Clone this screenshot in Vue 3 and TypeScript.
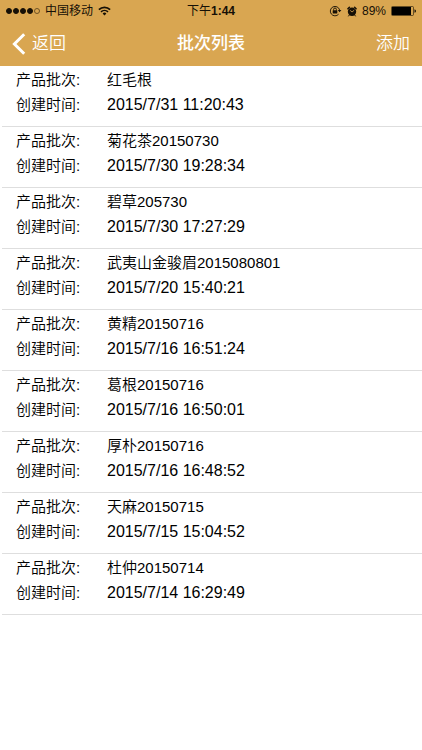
<script setup lang="ts">
interface Batch {
  name: string
  createdAt: string
}

const signalDots: boolean[] = [true, true, true, true, false]

const batches: Batch[] = [
  { name: '红毛根', createdAt: '2015/7/31 11:20:43' },
  { name: '菊花茶20150730', createdAt: '2015/7/30 19:28:34' },
  { name: '碧草205730', createdAt: '2015/7/30 17:27:29' },
  { name: '武夷山金骏眉2015080801', createdAt: '2015/7/20 15:40:21' },
  { name: '黄精20150716', createdAt: '2015/7/16 16:51:24' },
  { name: '葛根20150716', createdAt: '2015/7/16 16:50:01' },
  { name: '厚朴20150716', createdAt: '2015/7/16 16:48:52' },
  { name: '天麻20150715', createdAt: '2015/7/15 15:04:52' },
  { name: '杜仲20150714', createdAt: '2015/7/14 16:29:49' },
]
</script>

<template>
  <div class="screen">
    <header class="header">
      <div class="status">
        <div class="status-left">
          <span class="signal">
            <i v-for="(on, i) in signalDots" :key="i" class="dot" :class="{ on }"></i>
          </span>
          <span>中国移动</span>
          <svg width="13" height="10" viewBox="0 0 13 10" aria-hidden="true">
            <path d="M0.9 3.6 A8 8 0 0 1 12.1 3.6" fill="none" stroke="#161006" stroke-width="1.8" />
            <path d="M3 5.9 A5 5 0 0 1 10 5.9" fill="none" stroke="#161006" stroke-width="1.6" />
            <path d="M4.6 7.5 A2.7 2.7 0 0 1 8.4 7.5 L6.5 9.6 Z" fill="#161006" />
          </svg>
        </div>
        <div class="clock">下午<b>1:44</b></div>
        <div class="status-right">
          <svg width="13" height="12" viewBox="0 0 13 12" aria-hidden="true">
            <path d="M9.6 9.2 A4.7 4.7 0 1 1 10.6 5" fill="none" stroke="#161006" stroke-width="0.9" />
            <path d="M8.7 5 H12.4 L10.6 7.3 Z" fill="#161006" />
            <path d="M4.6 5.5 V4.4 A1.4 1.4 0 0 1 7.4 4.4 V5.5" fill="none" stroke="#161006" stroke-width="0.9" />
            <rect x="3.7" y="5.2" width="4.6" height="3.3" rx="0.4" fill="#161006" />
          </svg>
          <svg width="10" height="11" viewBox="0 0 10 11" aria-hidden="true">
            <circle cx="5" cy="5.8" r="4.2" fill="#161006" />
            <path d="M0.9 2.7 L2.4 1.3 M9.1 2.7 L7.6 1.3" stroke="#161006" stroke-width="1.5" stroke-linecap="round" />
            <path d="M2.2 9.2 L1.6 10 M7.8 9.2 L8.4 10" stroke="#161006" stroke-width="1" stroke-linecap="round" />
            <path d="M3.2 4.4 L5 6 L7.2 4.2" fill="none" stroke="#d9a651" stroke-width="0.8" />
          </svg>
          <span>89%</span>
          <svg width="25" height="10" viewBox="0 0 25 10" aria-hidden="true">
            <rect x="0.5" y="0.5" width="22" height="9" rx="1" fill="none" stroke="#161006" stroke-width="0.6" />
            <rect x="1" y="1" width="19" height="8" fill="#000" />
            <path d="M23.5 3.2 Q25 3.6 25 5 Q25 6.4 23.5 6.8 Z" fill="#161006" />
          </svg>
        </div>
      </div>
      <nav class="nav">
        <button type="button" class="nav-button back">
          <svg width="14" height="22" viewBox="0 0 14 22" aria-hidden="true">
            <path d="M12.2 1.3 L2.4 11 L12.2 20.7" fill="none" stroke="#fff" stroke-width="3" />
          </svg>
          <span>返回</span>
        </button>
        <h1 class="title">批次列表</h1>
        <button type="button" class="nav-button add">添加</button>
      </nav>
    </header>
    <main>
      <ul class="list">
        <li v-for="batch in batches" :key="batch.createdAt" class="item">
          <dl class="fields">
            <dt>产品批次:</dt>
            <dd>{{ batch.name }}</dd>
            <dt>创建时间:</dt>
            <dd class="time">{{ batch.createdAt }}</dd>
          </dl>
        </li>
      </ul>
    </main>
  </div>
</template>

<style>
body {
  background: #fff;
}
</style>

<style scoped>
.screen {
  font-family: "Liberation Sans", "Noto Sans CJK SC", sans-serif;
  color: #000;
}

.header {
  background: #d9a651;
}

.status {
  display: grid;
  grid-template-columns: 1fr auto 1fr;
  align-items: center;
  height: 22px;
  padding: 0 6px;
  font-size: 12px;
  line-height: 22px;
  color: #161006;
}

.status-left,
.status-right,
.signal {
  display: flex;
  align-items: center;
}

.status-left {
  gap: 5px;
}

.signal {
  gap: 1px;
}

.dot {
  box-sizing: border-box;
  width: 6px;
  height: 6px;
  border: 1px solid #6d5226;
  border-radius: 50%;
}

.dot.on {
  border-color: #161006;
  background: #161006;
}

.status-right {
  justify-content: flex-end;
  gap: 5px;
}

.nav {
  display: grid;
  grid-template-columns: 1fr auto 1fr;
  align-items: center;
  height: 44px;
  padding: 0 12px;
  color: #fff;
}

.title {
  margin: 0;
  font-size: 17px;
  font-weight: 500;
  line-height: 24px;
}

.nav-button {
  display: flex;
  align-items: center;
  gap: 6px;
  padding: 0;
  border: 0;
  background: none;
  font-family: inherit;
  font-size: 17px;
  font-weight: 350;
  line-height: 24px;
  color: #fff;
}

.back {
  justify-self: start;
}

.add {
  justify-self: end;
}

.list {
  margin: 0;
  padding: 0 0 0 2px;
  list-style: none;
}

.item {
  padding: 1px 14px 9px;
  border-bottom: 1px solid #dedede;
}

.fields {
  display: grid;
  grid-template-columns: 91px 1fr;
  margin: 0;
  font-size: 15px;
  font-weight: 350;
  line-height: 25px;
}

.fields dt,
.fields dd {
  margin: 0;
}

.fields .time {
  font-size: 16px;
}
</style>
